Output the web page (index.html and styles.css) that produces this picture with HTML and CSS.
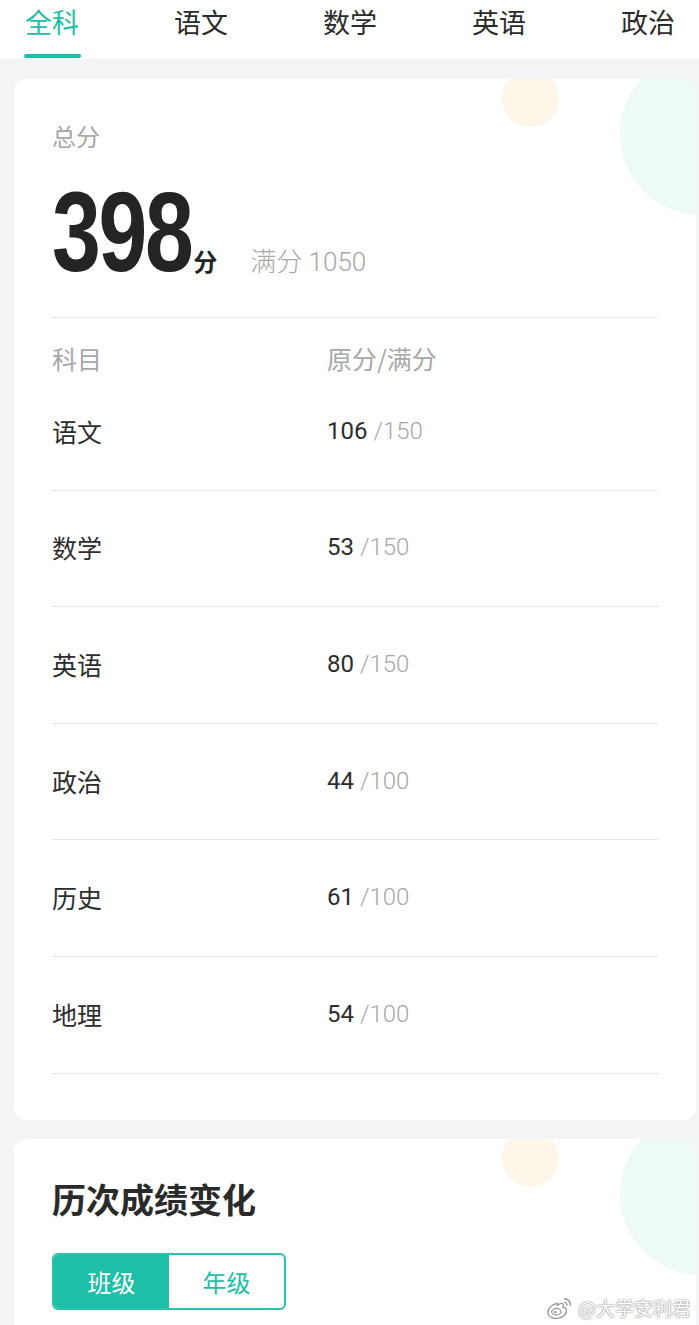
FILE: index.html
```html
<!DOCTYPE html>
<html lang="zh-CN">
<head>
<meta charset="utf-8">
<title>成绩</title>
<link rel="stylesheet" href="styles.css">
</head>
<body>
<nav class="tabs">
  <div class="tab active">全科</div>
  <div class="tab">语文</div>
  <div class="tab">数学</div>
  <div class="tab">英语</div>
  <div class="tab">政治</div>
</nav>
<main class="page">
  <section class="card">
    <span class="deco deco-yellow"></span>
    <span class="deco deco-teal"></span>
    <div class="label">总分</div>
    <div class="total">
      <span class="total-num">398</span>
      <span class="total-unit">分</span>
      <span class="total-full">满分 1050</span>
    </div>
    <div class="table">
      <div class="thead">
        <span class="col-subj">科目</span>
        <span class="col-score">原分/满分</span>
      </div>
      <div class="row"><span class="col-subj">语文</span><span class="col-score"><b>106</b> <i>/150</i></span></div>
      <div class="row"><span class="col-subj">数学</span><span class="col-score"><b>53</b> <i>/150</i></span></div>
      <div class="row"><span class="col-subj">英语</span><span class="col-score"><b>80</b> <i>/150</i></span></div>
      <div class="row"><span class="col-subj">政治</span><span class="col-score"><b>44</b> <i>/100</i></span></div>
      <div class="row"><span class="col-subj">历史</span><span class="col-score"><b>61</b> <i>/100</i></span></div>
      <div class="row"><span class="col-subj">地理</span><span class="col-score"><b>54</b> <i>/100</i></span></div>
    </div>
  </section>
  <section class="card card-history">
    <span class="deco deco-yellow"></span>
    <span class="deco deco-teal"></span>
    <h2 class="title">历次成绩变化</h2>
    <div class="toggle">
      <div class="seg on">班级</div>
      <div class="seg">年级</div>
    </div>
  </section>
</main>
<div class="watermark">
  <svg class="wb" width="28" height="24" viewBox="0 0 30 26">
    <path d="M12 8c-6 1-11 6-10 11 1 4 6 6 11 5 6-1 10-5 9-9-0.5-2-2-3-4-3 1-2 1-4-1-4-1.5 0-3 1-5 2 1-2 0-3-1-2z" fill="#fff" stroke="#9a9a9a" stroke-width="1.4"/>
    <ellipse cx="11" cy="17" rx="5" ry="3.5" fill="none" stroke="#9a9a9a" stroke-width="1.3"/>
    <circle cx="10" cy="17.5" r="1.3" fill="#9a9a9a"/>
    <path d="M20 3a6 6 0 0 1 6 7" fill="none" stroke="#9a9a9a" stroke-width="1.6" stroke-linecap="round"/>
    <path d="M20 7a2.5 2.5 0 0 1 2.5 3" fill="none" stroke="#9a9a9a" stroke-width="1.4" stroke-linecap="round"/>
  </svg>
  <span>@大学安利君</span>
</div>
</body>
</html>
```
FILE: styles.css
```css
* { box-sizing: border-box; }
html, body { margin: 0; padding: 0; }
body {
  width: 699px;
  min-height: 1325px;
  background: #f2f4f5;
  font-family: "Noto Sans", "Noto Sans CJK SC", sans-serif;
  color: #2d2d2d;
  overflow: hidden;
  position: relative;
}
.tabs {
  height: 59px;
  background: #fff;
  display: flex;
  padding-left: 25px;
  gap: 94px;
}
.tab {
  position: relative;
  font-size: 27px;
  line-height: 44px;
  width: 55px;
  white-space: nowrap;
  color: #2b2b2b;
  font-family: "Noto Sans CJK SC", sans-serif;
}
.tab.active { color: #1dbfa7; }
.tab.active::after {
  content: "";
  position: absolute;
  left: -1px;
  top: 54px;
  width: 57px;
  height: 4px;
  border-radius: 2px;
  background: #1dbfa7;
}
.page {
  padding: 20px 3px 0 14px;
  display: flex;
  flex-direction: column;
  gap: 19px;
}
.card {
  position: relative;
  overflow: hidden;
  background: #fff;
  border-radius: 12px;
  padding: 40px 38px 46px 38px;
}
.deco {
  position: absolute;
  border-radius: 50%;
}
.deco-yellow {
  left: 488px;
  top: -9px;
  width: 57px;
  height: 57px;
  background: #fef6e8;
}
.deco-teal {
  left: 606px;
  top: -26px;
  width: 162px;
  height: 162px;
  background: #eefaf8;
}
.label {
  position: relative;
  font-size: 24px;
  line-height: 34px;
  color: #a8a8a8;
  font-family: "Noto Sans CJK SC", sans-serif;
}
.total {
  position: relative;
  display: flex;
  align-items: baseline;
  margin-top: 22px;
  height: 142px;
}
.total-num {
  font-family: "Liberation Sans Narrow", "Liberation Sans", sans-serif;
  font-weight: 700;
  font-size: 114px;
  line-height: 114px;
  color: #232425;
  letter-spacing: -3px;
  display: inline-block;
  transform: scaleX(0.77);
  transform-origin: left bottom;
  margin-right: -42px;
}
.total-unit {
  font-family: "Noto Sans CJK SC", sans-serif;
  font-weight: 700;
  font-size: 24px;
  color: #232425;
  margin-left: 2px;
}
.total-full {
  font-size: 26px;
  color: #a8a8a8;
  margin-left: 33px;
  font-weight: 300;
  font-family: Roboto, "Noto Sans CJK SC", sans-serif;
}
.table { position: relative; border-top: 1px solid #e4e6e8; }
.thead, .row {
  display: flex;
  align-items: center;
}
.thead {
  height: 56px;
  padding-top: 24px;
  color: #a8a8a8;
}
.row {
  height: 116.6px;
  border-bottom: 1px solid #e4e6e8;
  padding-bottom: 2px;
}
.col-subj {
  width: 275px;
  font-size: 25px;
  font-family: "Noto Sans CJK SC", sans-serif;
}
.col-score {
  font-size: 24px;
  font-family: Roboto, "Noto Sans CJK SC", sans-serif;
}
.thead .col-score { font-size: 25px; font-family: "Noto Sans CJK SC", sans-serif; }
.col-score b { font-weight: 400; color: #2d2d2d; }
.col-score i { font-style: normal; font-weight: 300; color: #a8a8a8; }
.card-history {
  padding-top: 36px;
  height: 240px;
}
.title {
  position: relative;
  margin: 0;
  font-size: 34px;
  line-height: 48px;
  font-weight: 700;
  color: #2a2a2a;
  font-family: "Noto Sans CJK SC", sans-serif;
}
.toggle {
  position: relative;
  margin-top: 30px;
  width: 234px;
  height: 57px;
  border: 2px solid #2cc3ad;
  border-radius: 6px;
  overflow: hidden;
  display: flex;
}
.seg {
  flex: 1;
  display: flex;
  align-items: center;
  justify-content: center;
  font-size: 24px;
  color: #1dbfa7;
  font-family: "Noto Sans CJK SC", sans-serif;
}
.seg.on { background: #1dbfa7; color: #fff; }
.watermark {
  position: absolute;
  right: 8px;
  top: 1294px;
  display: flex;
  align-items: center;
  gap: 4px;
  font-size: 19px;
  color: #fff;
  font-family: "Noto Sans CJK SC", sans-serif;
  text-shadow: 0 0 1px #8a8a8a, 0 0 2px #8a8a8a;
}
```
